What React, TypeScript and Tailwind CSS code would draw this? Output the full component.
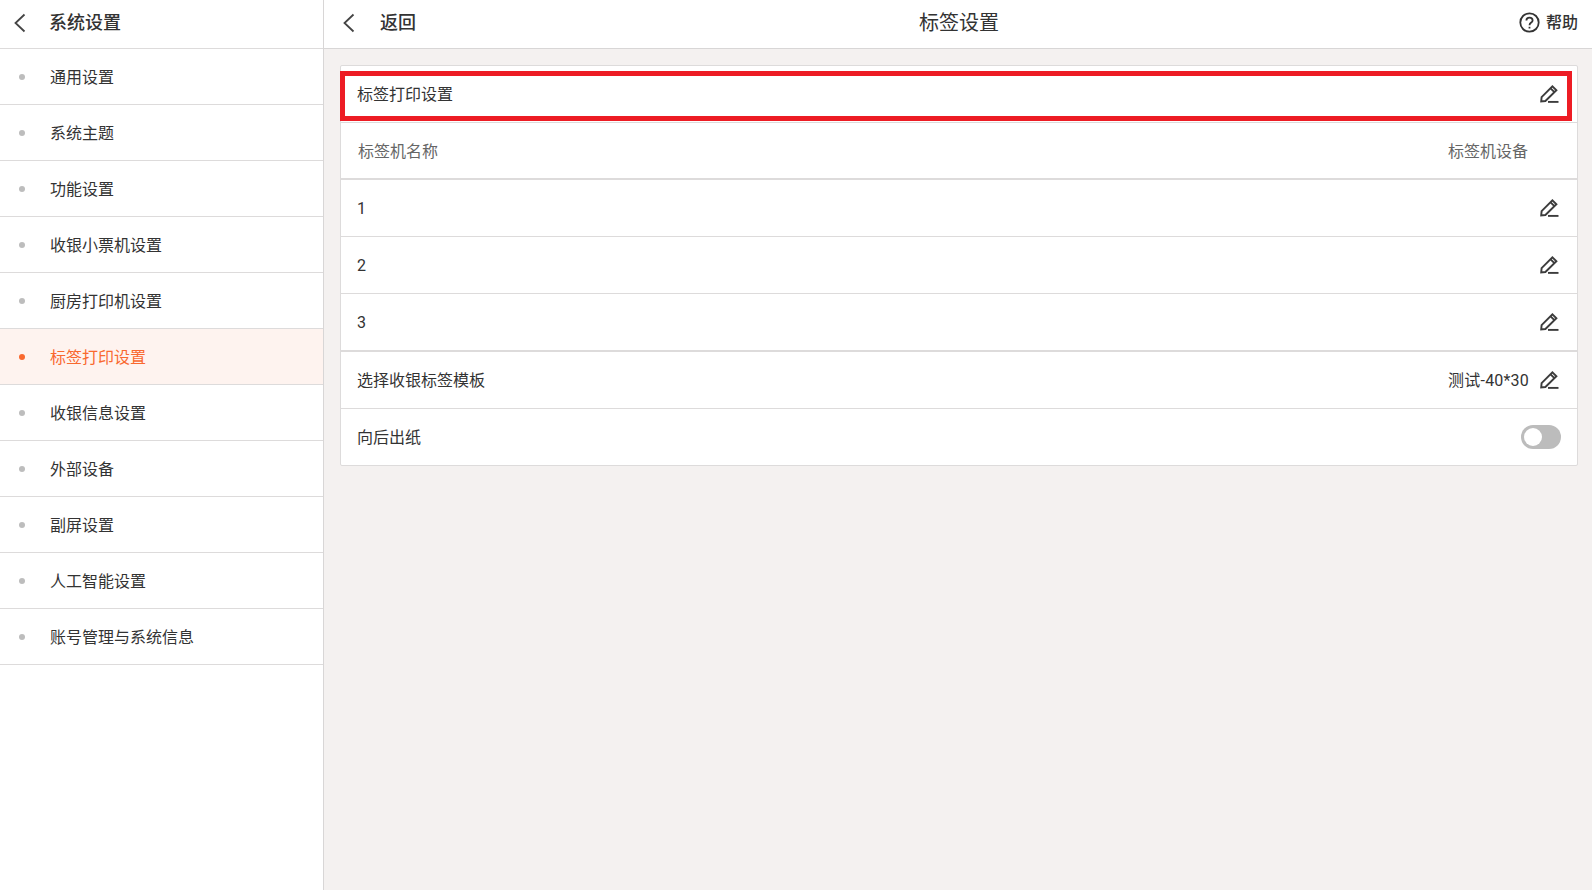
import React from "react";

const menu = [
  "通用设置",
  "系统主题",
  "功能设置",
  "收银小票机设置",
  "厨房打印机设置",
  "标签打印设置",
  "收银信息设置",
  "外部设备",
  "副屏设置",
  "人工智能设置",
  "账号管理与系统信息",
];

function Back() {
  return (
    <svg className="w-[14px] h-[20px] text-[#444]" viewBox="0 0 14 20" fill="none" stroke="currentColor" strokeWidth={1.8}>
      <path d="M11.5 1.5 L2.5 10 L11.5 18.5" />
    </svg>
  );
}

function Pencil() {
  return (
    <svg className="w-[19px] h-[18px] -mt-[2px] text-[#3c3c3c]" viewBox="0 0 19 18" fill="none" stroke="currentColor" strokeWidth={1.9}>
      <path d="M1.2 16.4 L1.6 12.2 L12.4 1.4 L16.4 5.2 L5.4 16 Z" />
      <path d="M10.6 3.4 L14.4 7.2" />
      <path d="M8 16.9 H18.5" />
    </svg>
  );
}

function Row({ children, className = "" }: { children: React.ReactNode; className?: string }) {
  return <div className={`flex items-center justify-between pt-[2px] pl-[16px] pr-[18px] ${className}`}>{children}</div>;
}

export default function App() {
  return (
    <div className="flex h-[890px] w-[1592px] overflow-hidden bg-[#f4f1f0] text-[16px] text-[#333] font-['Roboto','Noto_Sans_CJK_SC',sans-serif]">
      <aside className="w-[324px] shrink-0 bg-white border-r border-[#d8d6d6]">
        <div className="flex items-center h-[49px] border-b border-[#dddbdb] pl-[13px] pb-[3px]">
          <Back />
          <span className="ml-[22px] text-[18px] font-medium">系统设置</span>
        </div>
        {menu.map((item) => {
          const active = item === "标签打印设置";
          return (
            <div
              key={item}
              className={`flex items-center h-[56px] border-b border-[#dddbdb] pl-[19px] pt-[2px] ${active ? "bg-[#fef3ef] text-[#f9692f]" : ""}`}
            >
              <span className={`w-[6px] h-[6px] -mt-[2px] rounded-full ${active ? "bg-[#f9692f]" : "bg-[#bdbdbd]"}`} />
              <span className="ml-[25px]">{item}</span>
            </div>
          );
        })}
      </aside>
      <main className="flex-1 min-w-0">
        <header className="relative flex items-center justify-between h-[49px] bg-white border-b border-[#d8d6d6] pl-[18px] pr-[14px] pb-[3px]">
          <div className="flex items-center">
            <Back />
            <span className="ml-[24px] text-[18px] font-medium">返回</span>
          </div>
          <span className="absolute left-[595px] text-[20px]">标签设置</span>
          <div className="flex items-center gap-[6px] font-medium">
            <svg className="w-[21px] h-[21px] text-[#333]" viewBox="0 0 21 21" fill="none" stroke="currentColor" strokeWidth={1.8}>
              <circle cx="10.5" cy="10.5" r="9.2" />
              <path d="M7.4 8.4 C7.4 4.8 13.6 4.8 13.6 8.4 C13.6 10.6 10.5 10.4 10.5 13.2" />
              <path d="M10.5 14.8 V16.5" />
            </svg>
            <span>帮助</span>
          </div>
        </header>
        <div className="pt-[16px] pl-[16px] pr-[14px]">
          <div className="relative bg-white border border-[#dddbdb] rounded-[2px]">
            <div className="absolute left-[-1px] top-[5px] w-[1232px] h-[50px] border-[5px] border-[#ed1c24]" />
            <Row className="h-[57px] border-b border-[#dddbdb]">
              <span>标签打印设置</span>
              <Pencil />
            </Row>
            <div className="flex items-center justify-between h-[57px] pt-[2px] pl-[17px] pr-[49px] border-b-2 border-[#dddbdb] text-[#666]">
              <span>标签机名称</span>
              <span>标签机设备</span>
            </div>
            {["1", "2"].map((n) => (
              <Row key={n} className="h-[57px] border-b border-[#dddbdb]">
                <span>{n}</span>
                <Pencil />
              </Row>
            ))}
            <Row className="h-[58px] border-b-2 border-[#dddbdb]">
              <span>3</span>
              <Pencil />
            </Row>
            <Row className="h-[57px] border-b border-[#dddbdb]">
              <span>选择收银标签模板</span>
              <div className="flex items-center gap-[11px]">
                <span className="tracking-[0.2px]">测试-40*30</span>
                <Pencil />
              </div>
            </Row>
            <div className="flex items-center justify-between h-[56px] pl-[16px] pr-[16px]">
              <span className="pt-[2px]">向后出纸</span>
              <div className="flex items-center w-[40px] h-[24px] rounded-full bg-[#bcbcbc] pl-[3px]">
                <span className="w-[18px] h-[18px] rounded-full bg-white" />
              </div>
            </div>
          </div>
        </div>
      </main>
    </div>
  );
}
